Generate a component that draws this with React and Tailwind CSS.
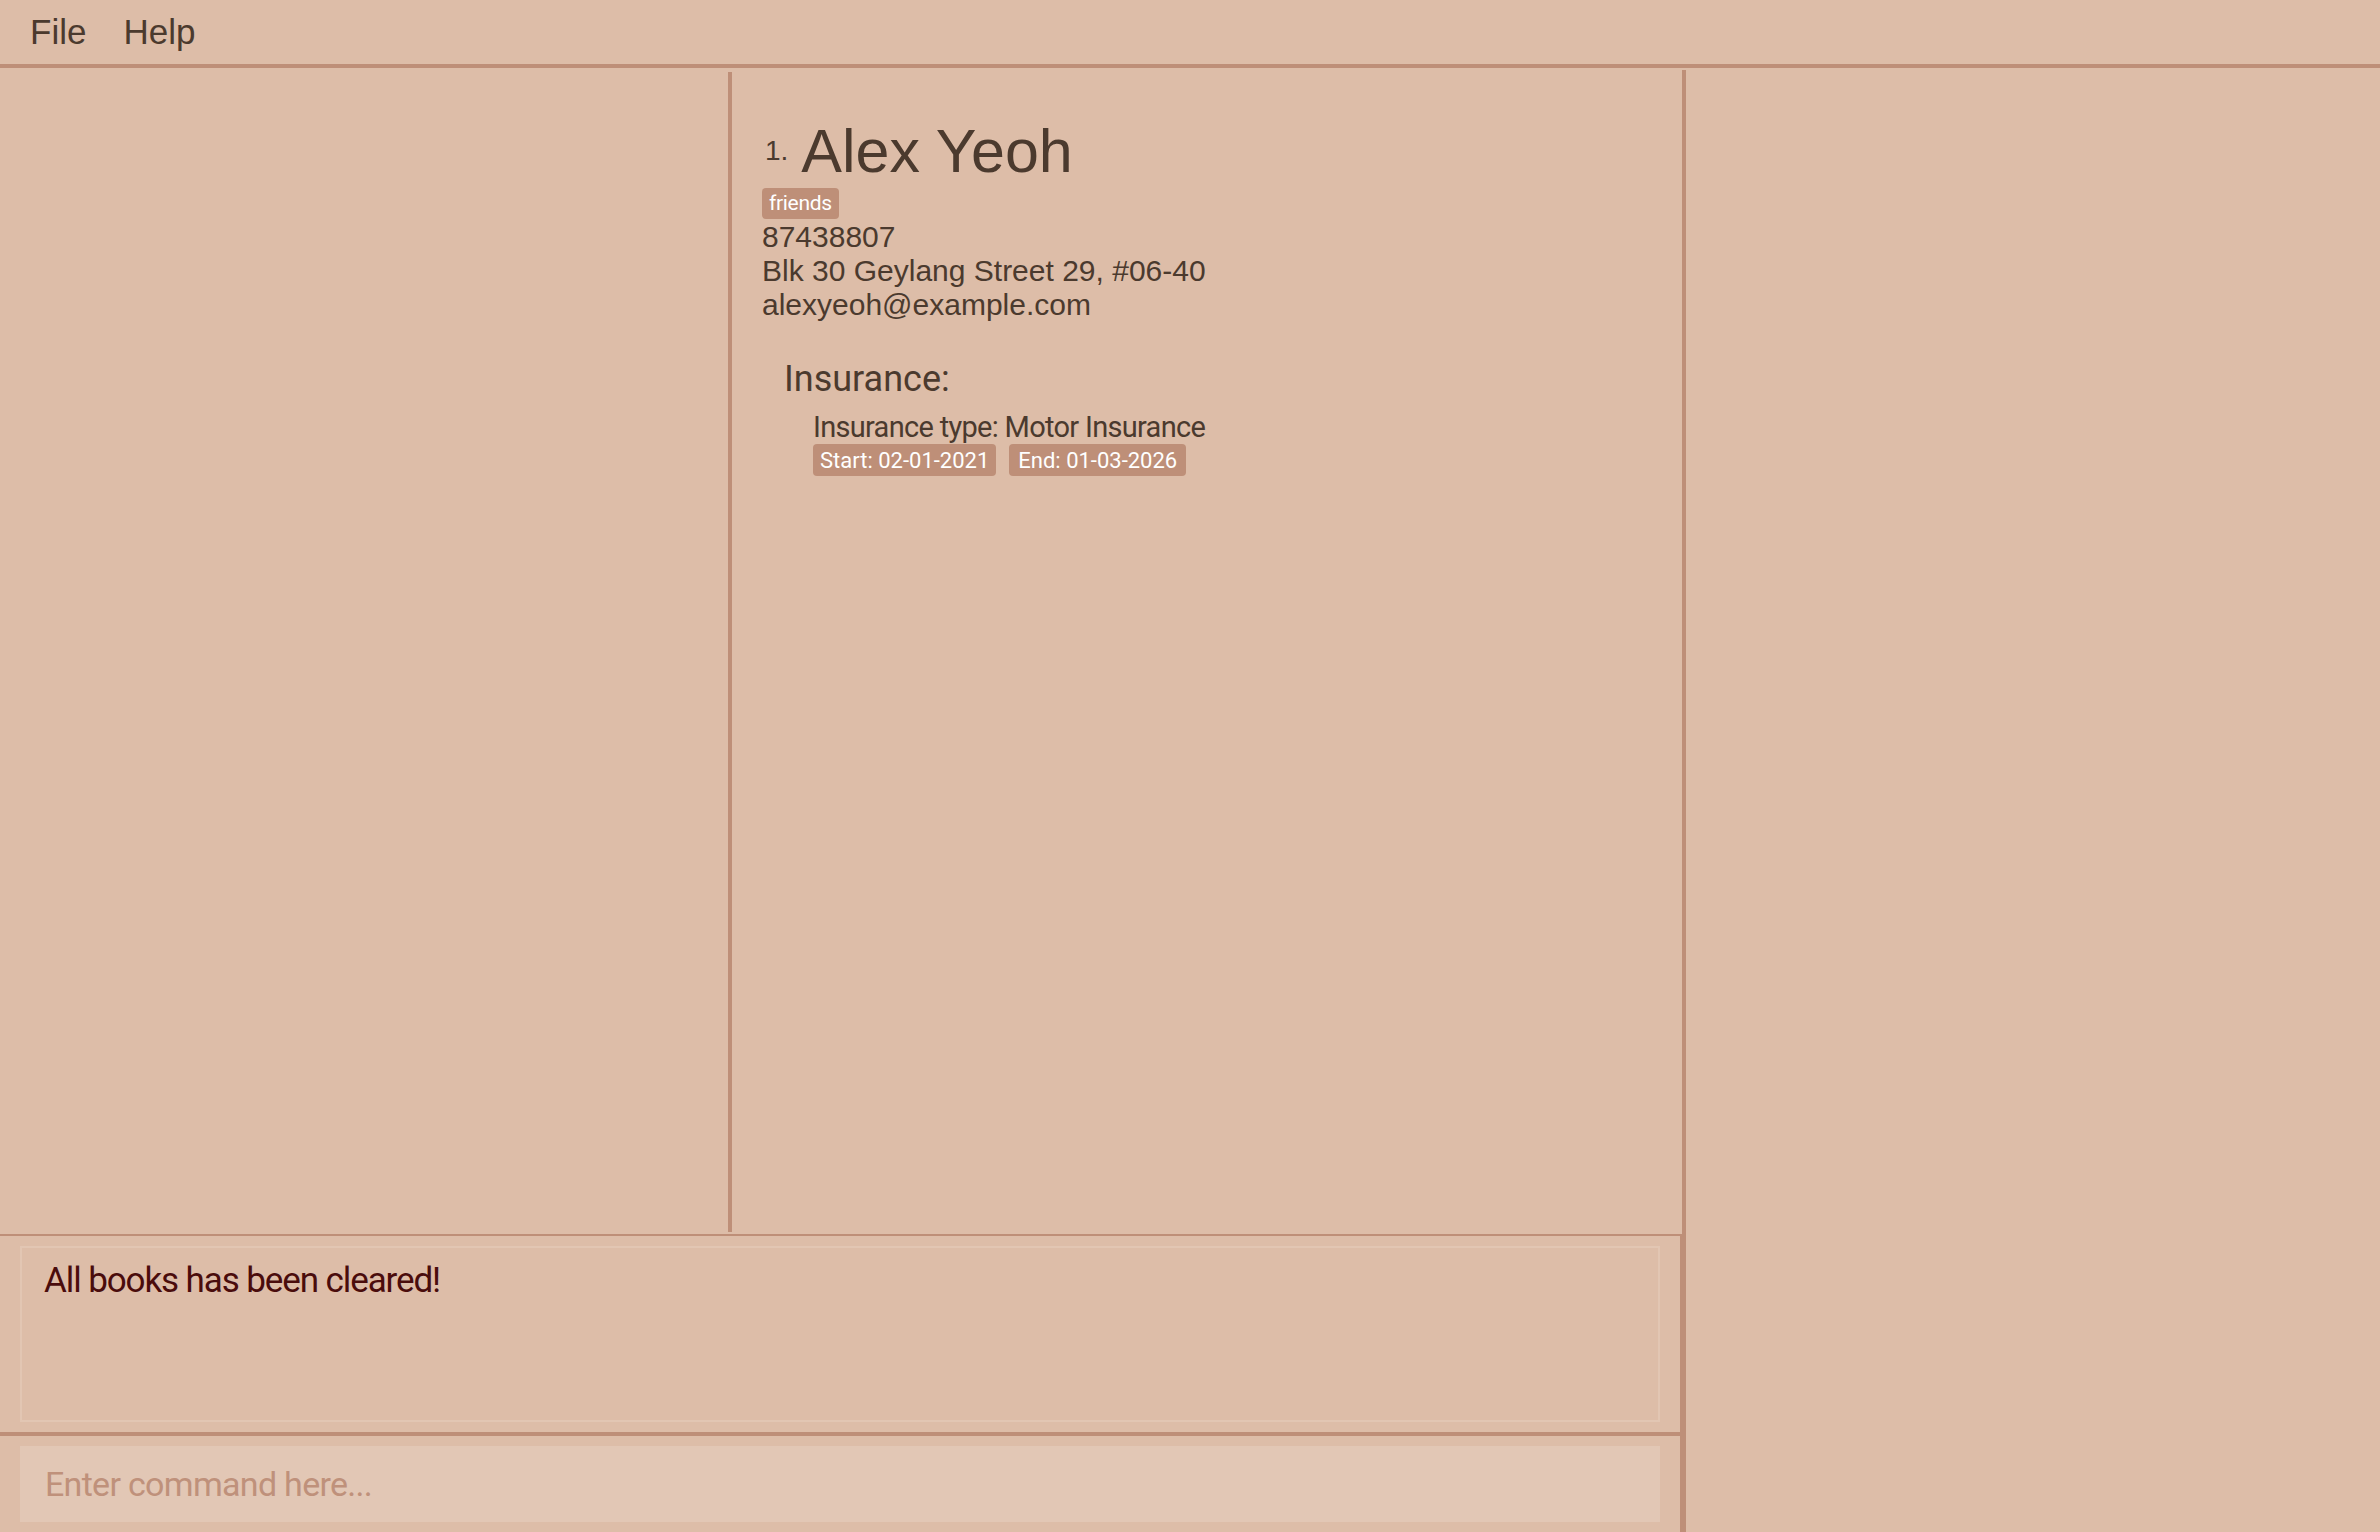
import React from 'react';

const person = {
  index: 1,
  name: 'Alex Yeoh',
  tags: ['friends'],
  phone: '87438807',
  address: 'Blk 30 Geylang Street 29, #06-40',
  email: 'alexyeoh@example.com',
  insurances: [{ type: 'Motor Insurance', start: '02-01-2021', end: '01-03-2026' }],
};

const Tag = ({ children }) => (
  <span className="inline-flex items-center h-[31px] px-[7px] rounded-[4px] bg-[#be8f78] text-white text-[21px] tracking-[-0.3px] font-['Roboto',sans-serif]">
    {children}
  </span>
);

const DateBadge = ({ children, wide }) => (
  <span
    className={
      wide
        ? "inline-flex items-center h-[32px] px-[9px] rounded-[4px] bg-[#be8f78] text-white text-[22px] font-['Roboto',sans-serif]"
        : "inline-flex items-center h-[32px] px-[7px] rounded-[4px] bg-[#be8f78] text-white text-[22px] font-['Roboto',sans-serif]"
    }
  >
    {children}
  </span>
);

const PersonCard = ({ p }) => (
  <div className="flex flex-col text-[#4b3a2e]">
    <div className="flex items-center gap-[13px] pl-[3px]">
      <span className="font-['Liberation_Sans',sans-serif] text-[28px] leading-[32px]">{p.index}.</span>
      <span className="font-['Liberation_Sans',sans-serif] text-[61px] leading-[68px]">{p.name}</span>
    </div>
    <div className="flex gap-2 mt-[3px]">
      {p.tags.map((t) => (
        <Tag key={t}>{t}</Tag>
      ))}
    </div>
    <div className="mt-[1px] font-['Liberation_Sans',sans-serif] text-[30px] leading-[34px]">
      <div>{p.phone}</div>
      <div>{p.address}</div>
      <div>{p.email}</div>
    </div>
    <div className="mt-[36px] pl-[22px] font-['Roboto',sans-serif]">
      <div className="text-[36px] leading-[42px]">Insurance:</div>
      <div className="pl-[29px] mt-[10px]">
        {p.insurances.map((ins) => (
          <div key={ins.type}>
            <div className="text-[29px] leading-[34px] tracking-[-0.7px]">Insurance type: {ins.type}</div>
            <div className="flex gap-[13px]">
              <DateBadge>Start: {ins.start}</DateBadge>
              <DateBadge wide>End: {ins.end}</DateBadge>
            </div>
          </div>
        ))}
      </div>
    </div>
  </div>
);

export default function App() {
  return (
    <div className="w-[2380px] h-[1532px] bg-[#ddbda8] flex flex-col overflow-hidden">
      {/* menu bar */}
      <div className="h-[68px] border-b-4 border-[#be8f78] flex items-center pl-[30px] gap-[37px] font-['Liberation_Sans',sans-serif] text-[35px] text-[#4b3a2e]">
        <span>File</span>
        <span>Help</span>
      </div>

      <div className="flex-1 flex min-h-0">
        <div className="w-[1682px] flex flex-col">
          {/* list + detail panes */}
          <div className="flex-1 flex min-h-0">
            <div className="w-[728px]" />
            <div className="w-[4px] mt-[4px] mb-[2px] bg-[#be8f78]" />
            <div className="flex-1 pl-[30px] pt-[49px]">
              <PersonCard p={person} />
            </div>
          </div>
          <div className="h-[2px] bg-[#be8f78]" />

          {/* result display */}
          <div className="h-[196px] px-[20px] py-[10px] border-r-2 border-[#be8f78]">
            <div className="h-full border-2 border-[#e2c6b3] pl-[22px] pt-[13px] font-['Roboto',sans-serif] text-[35px] leading-[40px] tracking-[-1.1px] text-[#4a0c0c]">
              All books has been cleared!
            </div>
          </div>
          <div className="h-[4px] bg-[#be8f78]" />

          {/* command box */}
          <div className="h-[96px] px-[20px] py-[10px] border-r-2 border-[#be8f78]">
            <input
              className="w-full h-full bg-[#e2c7b5] pl-[25px] outline-none font-['Roboto',sans-serif] text-[34px] tracking-[-0.7px] text-[#4b3a2e] placeholder:text-[#bf917b]"
              placeholder="Enter command here..."
            />
          </div>
        </div>
        <div className="w-[4px] mt-[2px] bg-[#be8f78]" />
        <div className="flex-1" />
      </div>
    </div>
  );
}
